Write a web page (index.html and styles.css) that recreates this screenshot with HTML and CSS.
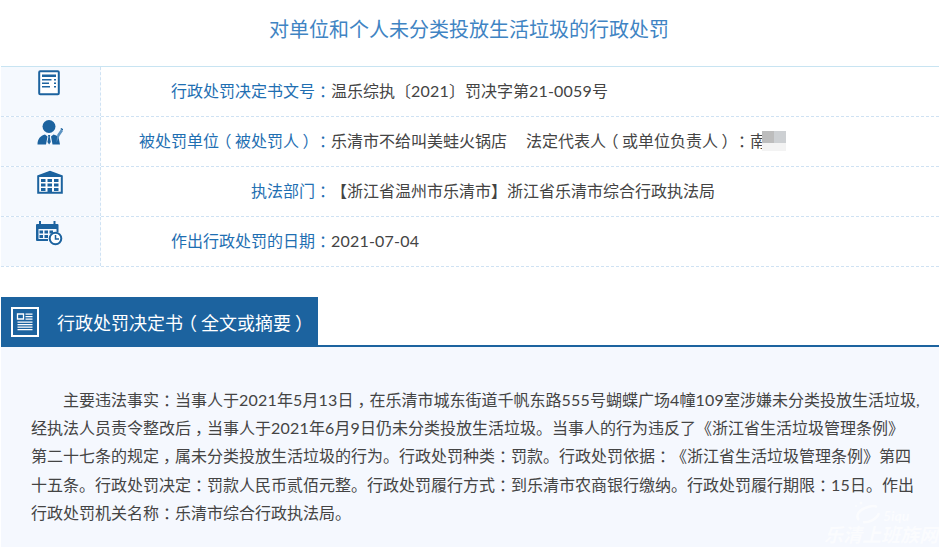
FILE: index.html
```html
<!DOCTYPE html>
<html lang="zh-CN">
<head>
<meta charset="utf-8">
<title>对单位和个人未分类投放生活垃圾的行政处罚</title>
<link rel="stylesheet" href="styles.css">
</head>
<body>
<main class="page">
  <h1 class="title">对单位和个人未分类投放生活垃圾的行政处罚</h1>
  <section class="info">
    <div class="row">
      <div class="icon-cell">
        <svg class="icon" width="24" height="26" viewBox="0 0 24 26"><rect x="1.200" y="1.200" width="19.600" height="23" rx="1" fill="#fff" stroke="#1c639f" stroke-width="2"/><path d="M4 4.500h14v2.400H4zM4 9h9.500v1.400H4zM4 12.500h7v1.400H4zM4 16h8v1.400H4zM16 9h2v1.400h-2zM16 12.500h2v1.400h-2zM16 16h2v1.400h-2z" fill="#1c639f"/></svg>
      </div>
      <div class="label">行政处罚决定书文号<span class="pm">：</span></div>
      <div class="value">温乐综执〔<span class="n">2021</span>〕罚决字第<span class="n">21-0059</span>号</div>
    </div>
    <div class="row">
      <div class="icon-cell">
        <svg class="icon" width="26" height="26" viewBox="0 0 26 26"><circle cx="12" cy="6.500" r="6.500" fill="#1c639f"/><path d="M0.500 24.500c0-5.500 3-9 7.500-10l2.500 2-1.500 8zM23 24.500h-7.500l-1.500-8 2.500-2c2 .4 3.700 1.300 5 2.500z" fill="#1c639f"/><path d="M11 15h2.200l-.4 2 1 5-1.700 2.500-1.700-2.500 1-5z" fill="#1c639f"/><path d="M19.500 22.500l.8-8 3.500-5 2.200 1.500-3.500 5z" fill="#5b93c2"/><path d="M23.800 8.500l2.200 1.500" stroke="#1c639f" stroke-width="1.500"/></svg>
      </div>
      <div class="label">被处罚单位<span class="po">（</span>被处罚人<span class="pc">）</span><span class="pm">：</span></div>
      <div class="value">乐清市不给叫美蛙火锅店<span class="legal">法定代表人<span class="po">（</span>或单位负责人<span class="pc">）</span><span class="pm">：</span><span class="blur">南<span class="blur-patch" aria-hidden="true"></span></span></span></div>
    </div>
    <div class="row">
      <div class="icon-cell">
        <svg class="icon" width="26" height="24" viewBox="0 0 26 24"><path d="M1.200 6.200L13 1.800l11.800 4.400V22.800H1.200z" fill="#fff" stroke="#1c639f" stroke-width="2"/><path d="M1 6L13 1.500 25 6v1H1z" fill="#1c639f"/><g fill="#1c639f"><rect x="4" y="9" width="4.500" height="3"/><rect x="10.500" y="9" width="4.500" height="3"/><rect x="17" y="9" width="4.500" height="3"/><rect x="4" y="13.500" width="4.500" height="3"/><rect x="10.500" y="13.500" width="4.500" height="3"/><rect x="17" y="13.500" width="4.500" height="3"/><rect x="4" y="18" width="4.500" height="3"/><rect x="10.500" y="18" width="4.500" height="5"/><rect x="17" y="18" width="4.500" height="3"/></g></svg>
      </div>
      <div class="label">执法部门<span class="pm">：</span></div>
      <div class="value">【浙江省温州市乐清市】浙江省乐清市综合行政执法局</div>
    </div>
    <div class="row">
      <div class="icon-cell">
        <svg class="icon" width="27" height="26" viewBox="0 0 27 26"><path d="M1 4h20.500a1 1 0 0 1 1 1v7h-2V9H2.500v10H12v2H1a1 1 0 0 1-1-1V5a1 1 0 0 1 1-1z" fill="#1c639f"/><path d="M3 1h2v5H3zM17.500 1h2v5h-2z" fill="#1c639f"/><g fill="#1c639f"><rect x="3.500" y="10.500" width="3.500" height="3"/><rect x="8.500" y="10.500" width="3.500" height="3"/><rect x="13.500" y="10.500" width="3.500" height="3"/><rect x="3.500" y="15" width="3.500" height="3"/><rect x="8.500" y="15" width="3.500" height="3"/></g><circle cx="19.500" cy="18.500" r="5.800" fill="#fff" stroke="#1c639f" stroke-width="2"/><path d="M19.500 15v4h3.500" fill="none" stroke="#1c639f" stroke-width="1.500"/></svg>
      </div>
      <div class="label">作出行政处罚的日期<span class="pm">：</span></div>
      <div class="value"><span class="n">2021-07-04</span></div>
    </div>
  </section>
  <section class="decision">
    <header class="decision-head">
      <h2 class="decision-tab">
        <svg class="tab-icon" width="28" height="30" viewBox="0 0 28 30"><rect x="1" y="1" width="26" height="28" fill="none" stroke="#fff" stroke-width="2"/><path d="M6.500 7h6v5h-6z" fill="none" stroke="#fff" stroke-width="1.300"/><path d="M14.500 6.500h7v1.200h-7zM14.500 9h7v1.200h-7zM14.500 11.500h7v1.200h-7zM6.500 14.500h15v1.200h-15zM6.500 17h15v1.200h-15zM6.500 19.500h15v1.200h-15zM6.500 22h15v1.200h-15z" fill="#fff"/></svg>
        <span>行政处罚决定书<span class="po">（</span>全文或摘要<span class="pc">）</span></span>
      </h2>
    </header>
    <div class="decision-body">
      <p class="decision-text">主要违法事实<span class="pm">：</span>当事人于<span class="n">2021</span>年<span class="n">5</span>月<span class="n">13</span>日<span class="pm">，</span>在乐清市城东街道千帆东路<span class="n">555</span>号蝴蝶广场<span class="n">4</span>幢<span class="n">109</span>室涉嫌未分类投放生活垃圾,<br>经执法人员责令整改后<span class="pm">，</span>当事人于<span class="n">2021</span>年<span class="n">6</span>月<span class="n">9</span>日仍未分类投放生活垃圾。当事人的行为违反了《浙江省生活垃圾管理条例》<br>第二十七条的规定<span class="pm">，</span>属未分类投放生活垃圾的行为。行政处罚种类<span class="pm">：</span>罚款。行政处罚依据<span class="pm">：</span>《浙江省生活垃圾管理条例》第四<br>十五条。行政处罚决定<span class="pm">：</span>罚款人民币贰佰元整。行政处罚履行方式<span class="pm">：</span>到乐清市农商银行缴纳。行政处罚履行期限<span class="pm">：</span><span class="n">15</span>日。作出<br>行政处罚机关名称<span class="pm">：</span>乐清市综合行政执法局。</p>
      <div class="watermark" aria-hidden="true">
        <div class="wm-top">
          <svg class="wm-swirl" width="30" height="26" viewBox="0 0 30 26"><path d="M6 21c-4-4 0-10 6-12 5-2 9-3 12-1M10 23c6 1 14-3 16-9" fill="none" stroke="#fff" stroke-width="2.500"/><circle cx="8" cy="4" r="1.500" fill="#fff"/><circle cx="3" cy="7" r="1" fill="#fff"/></svg>
          <span class="wm-logo">5iqu</span>
        </div>
        <span class="wm-name">乐清上班族网</span>
      </div>
    </div>
  </section>
</main>
</body>
</html>
```
FILE: styles.css
```css
* { box-sizing: border-box; }
html, body { margin: 0; padding: 0; background: #fff; }
body {
  font-family: "Lato", "Noto Sans CJK SC", sans-serif;
  font-size: 16px;
  color: #444;
  overflow: hidden;
  height: 547px;
  text-spacing-trim: space-all;
}
.n { letter-spacing: .2px; }
.pm { padding-left: .25em; letter-spacing: -.25em; }
.po { margin-left: -.22em; margin-right: .22em; }
.pc { padding-left: .22em; letter-spacing: -.22em; }
.page { width: 938px; margin-left: 1px; }
.title {
  margin: 0;
  height: 66px;
  line-height: 58px;
  padding-right: 2px;
  font-size: 20px;
  font-weight: 400;
  text-align: center;
  color: #3f84c3;
}
.info { border-top: 1px solid #c8e4f2; }
.row {
  display: grid;
  grid-template-columns: 100px 230px 1fr;
  height: 50px;
  border-bottom: 1px dashed #cfe2f3;
  align-items: center;
}
.icon-cell {
  align-self: stretch;
  background: #f5f9fe;
  border-right: 1px dashed #cfe2f3;
  display: flex;
  justify-content: center;
  padding-top: 3px;
  padding-right: 2px;
}
.icon { display: block; }
.label { text-align: right; color: #1f6fb2; white-space: nowrap; padding-bottom: 3px; }
.value { white-space: nowrap; color: #444; padding-bottom: 3px; }
.legal { margin-left: 19px; }
.blur { position: relative; }
.blur-patch {
  position: absolute;
  left: 12px;
  top: 0;
  width: 24px;
  height: 20px;
  background: linear-gradient(90deg, #bdbdbd 50%, #cdd0d3 50%) top / 100% 12px no-repeat, #f3f3f3;
}
.decision { margin-top: 30px; }
.decision-head { border-bottom: 2px solid #1c639f; height: 50px; }
.decision-tab {
  margin: 0;
  width: 317px;
  height: 49px;
  background: #1c639f;
  color: #fff;
  display: flex;
  align-items: center;
  gap: 18px;
  padding-left: 10px;
  font-size: 18px;
  font-weight: 400;
  white-space: nowrap;
}
.tab-icon { display: block; }
.decision-body {
  position: relative;
  background: #f5f8fe;
  height: 200px;
  padding: 39px 5px 0 30px;
}
.decision-text {
  margin: 0;
  line-height: 28.200px;
  text-indent: 32px;
  color: #444;
}
.watermark {
  position: absolute;
  right: 0;
  bottom: 0;
  width: 116px;
  height: 50px;
  color: #fff;
  opacity: .6;
  font-style: italic;
  font-weight: 700;
  text-align: center;
}
.wm-top { display: flex; align-items: flex-end; height: 28px; padding-left: 30px; gap: 0; }
.wm-swirl { display: block; flex: none; }
.wm-logo { font-size: 14px; line-height: 18px; }
.wm-name { display: block; font-size: 19px; line-height: 20px; white-space: nowrap; }
```
